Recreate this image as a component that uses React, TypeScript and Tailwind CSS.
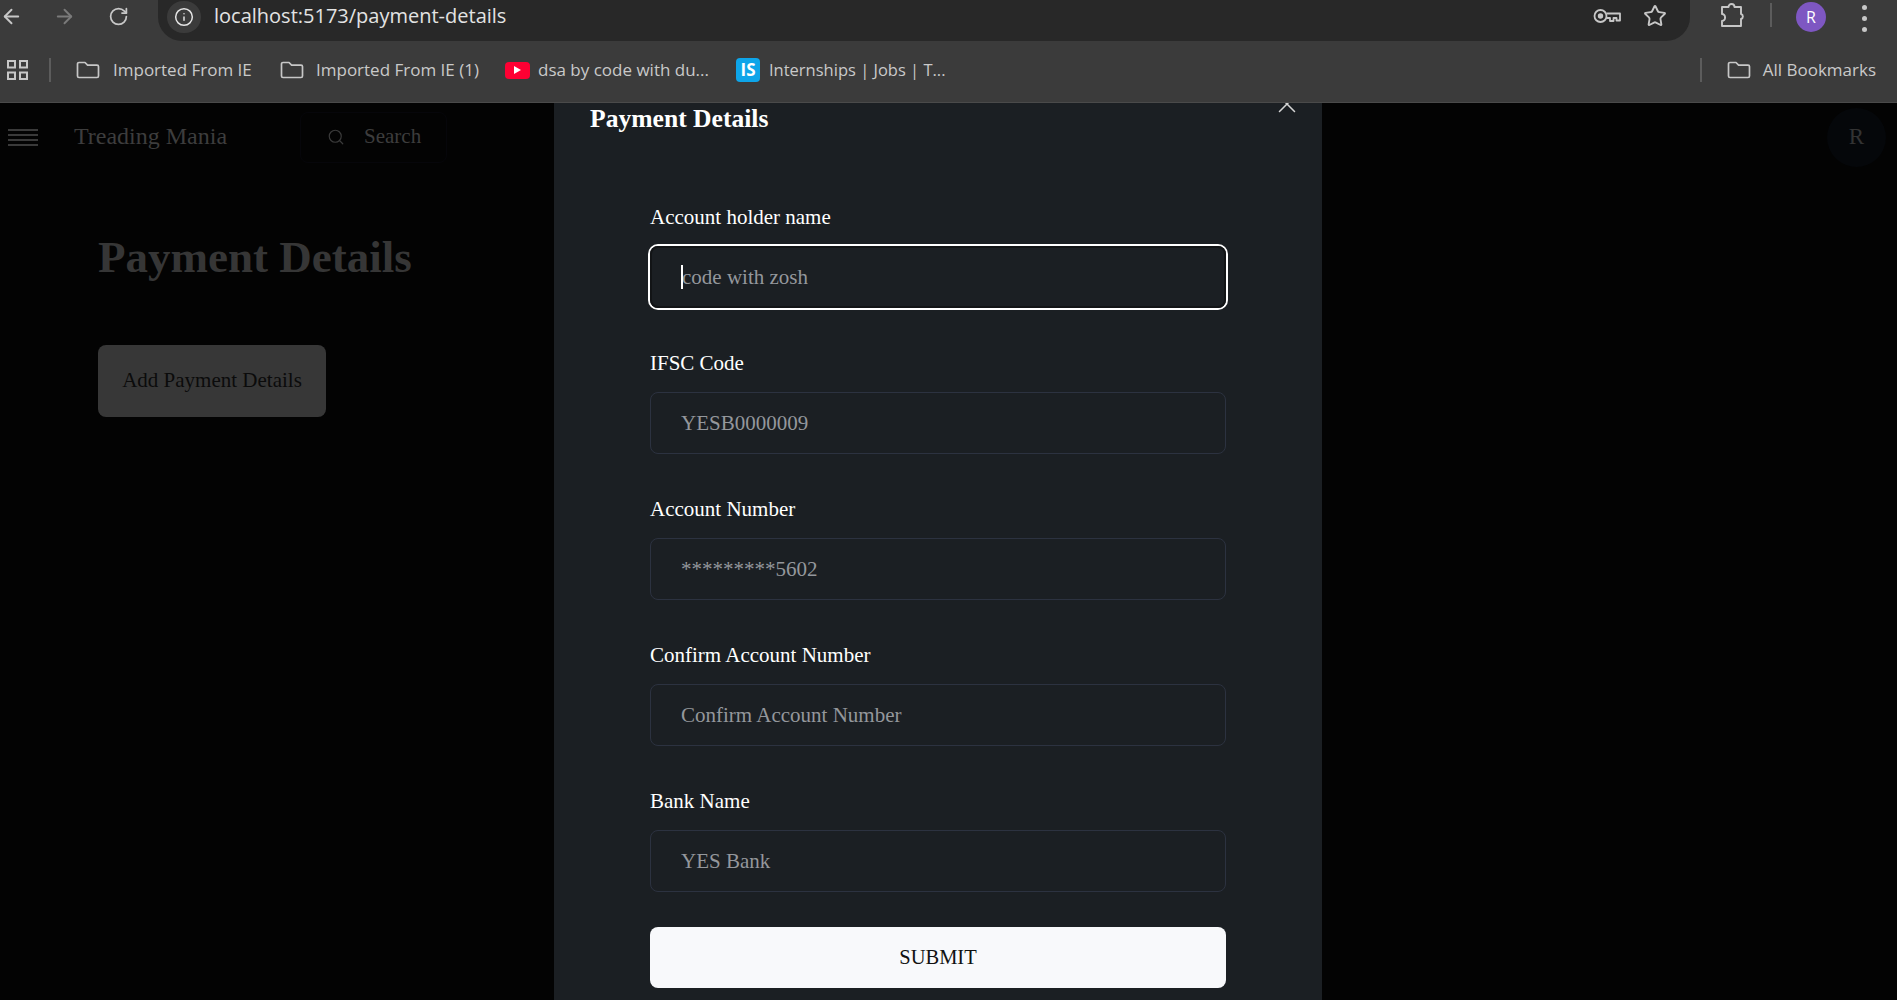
import { ArrowLeft, ArrowRight, RotateCw, Info, Star, Search, X } from 'lucide-react';

const uiFont = "font-['Open_Sans','Noto_Sans',sans-serif]";
const serif = "font-['Liberation_Serif',serif]";

function FolderIcon() {
  return (
    <svg width="24" height="18" viewBox="0 0 24 18" fill="none" stroke="#c7c7c7" strokeWidth="1.7" className="shrink-0">
      <path d="M1.5 15V3a1.5 1.5 0 0 1 1.5-1.5h6l2.6 2.6H21a1.5 1.5 0 0 1 1.5 1.5V15a1.5 1.5 0 0 1-1.5 1.5H3A1.5 1.5 0 0 1 1.5 15Z" strokeLinejoin="round" />
    </svg>
  );
}

function KeyIcon() {
  return (
    <svg width="28" height="16" viewBox="0 0 28 16" fill="none" stroke="#c7c7c7" strokeWidth="1.8">
      <circle cx="7.5" cy="8" r="6" />
      <circle cx="7.5" cy="8" r="1.8" fill="#c7c7c7" />
      <path d="M13.5 5.5H27v7h-3.5v-2.5h-3v3h-3.5v-3h-3.5" strokeLinejoin="round" />
    </svg>
  );
}

function PuzzleIcon() {
  return (
    <svg width="25" height="26" viewBox="0 0 25 26" fill="none" stroke="#c7c7c7" strokeWidth="1.9" strokeLinejoin="round">
      <path d="M2 5h6.5a3 3 0 0 1 6 0H21v7a2.6 2.6 0 0 1 0 5v7H2v-5a3 3 0 0 0 3-3.5A3 3 0 0 0 2 12Z" />
    </svg>
  );
}

function AppsIcon() {
  return (
    <svg width="21" height="20" viewBox="0 0 21 20" fill="none" stroke="#c7c7c7" strokeWidth="2">
      <rect x="1" y="1" width="7" height="6.5" />
      <rect x="13" y="1" width="7" height="6.5" />
      <rect x="1" y="12.5" width="7" height="6.5" />
      <rect x="13" y="12.5" width="7" height="6.5" />
    </svg>
  );
}

function BrowserChrome() {
  return (
    <div className={`shrink-0 h-[103px] bg-[#3b3b3b] border-b border-[#4a4a4a] ${uiFont}`}>
      <div className="h-[41px] flex">
        <div className="w-[158px] shrink-0 flex items-start pt-[5px]">
          <ArrowLeft size={23} strokeWidth={2} className="text-[#c7c7c7]" />
          <ArrowRight size={23} strokeWidth={2} className="text-[#7a7a7a] ml-[30px]" />
          <RotateCw size={21} strokeWidth={2} className="text-[#c7c7c7] ml-[32px] mt-[1px]" />
        </div>
        <div className="w-[1532px] shrink-0 bg-[#282828] rounded-br-[24px] rounded-bl-[24px] flex items-start pt-[1px]">
          <div className="ml-[9px] w-[34px] h-[32px] rounded-full bg-[#3b3b3b] flex items-center justify-center">
            <Info size={20} strokeWidth={1.8} className="text-[#e4e4e4]" />
          </div>
          <span className="ml-[13px] text-[20px] leading-[30px] text-[#e3e3e3]">localhost:5173/payment-details</span>
          <div className="ml-auto mr-[23px] flex items-center gap-[22px] pt-[3px]">
            <KeyIcon />
            <Star size={24} strokeWidth={1.9} className="text-[#c7c7c7]" />
          </div>
        </div>
        <div className="flex items-start pt-[2px] pl-[30px]">
          <PuzzleIcon />
          <div className="w-[2px] h-[24px] bg-[#5c5c5c] ml-[25px] mt-[1px]" />
          <div className="ml-[24px] w-[30px] h-[30px] rounded-full bg-[#7e57c2] flex items-center justify-center text-[16px] text-white">R</div>
          <div className="ml-[36px] flex flex-col gap-[6px] pt-[3px]">
            <span className="w-[5px] h-[5px] rounded-full bg-[#c7c7c7]" />
            <span className="w-[5px] h-[5px] rounded-full bg-[#c7c7c7]" />
            <span className="w-[5px] h-[5px] rounded-full bg-[#c7c7c7]" />
          </div>
        </div>
      </div>
      <div className="h-[61px] flex items-center pl-[7px] pb-[3px] text-[17px] text-[#c9c9c9]">
        <AppsIcon />
        <div className="w-[2px] h-[24px] bg-[#5c5c5c] ml-[21px] mr-[25px]" />
        <FolderIcon />
        <span className="ml-[13px] w-[167px] shrink-0 whitespace-nowrap">Imported From IE</span>
        <FolderIcon />
        <span className="ml-[12px] w-[189px] shrink-0 whitespace-nowrap">Imported From IE (1)</span>
        <div className="w-[25px] h-[17px] rounded-[4px] bg-[#ff0033] flex items-center justify-center shrink-0">
          <span className="block w-0 h-0 border-y-[4px] border-y-transparent border-l-[7px] border-l-white" />
        </div>
        <span className="ml-[8px] w-[198px] shrink-0 whitespace-nowrap">dsa by code with du...</span>
        <div className="w-[24px] h-[24px] rounded-[4px] bg-[#0ea5e9] flex items-center justify-center shrink-0 text-[17px] font-bold text-white">IS</div>
        <span className="ml-[9px] whitespace-nowrap text-[16.5px]">Internships | Jobs | T...</span>
        <div className="ml-auto w-[2px] h-[24px] bg-[#5c5c5c] mr-[25px]" />
        <FolderIcon />
        <span className="ml-[12px] mr-[21px] whitespace-nowrap">All Bookmarks</span>
      </div>
    </div>
  );
}

function Field({ label, placeholder, focused }: { label: string; placeholder: string; focused?: boolean }) {
  return (
    <div>
      <label className="block text-[21px] leading-[22px] text-white mb-[18px]">{label}</label>
      <div className="relative">
        <input
          readOnly
          placeholder={placeholder}
          className={`w-full h-[62px] pl-[30px] pr-4 rounded-lg bg-transparent outline-none text-[21px] text-white placeholder:text-[#94979c] ${serif} ${
            focused ? 'border-2 border-[#121416] ring-2 ring-white' : 'border border-[#2c3240]'
          }`}
        />
        {focused && <span className="absolute left-[31px] top-[19px] w-[2px] h-[24px] bg-white" />}
      </div>
    </div>
  );
}

function PageBehind() {
  return (
    <div className={`h-full bg-[#030303] ${serif}`}>
      <div className="h-[68px] flex items-center pl-2">
        <div className="w-[30px] flex flex-col gap-[3px]">
          <span className="h-[2px] bg-[#3a3a3a]" />
          <span className="h-[2px] bg-[#3a3a3a]" />
          <span className="h-[2px] bg-[#3a3a3a]" />
          <span className="h-[2px] bg-[#3a3a3a]" />
        </div>
        <span className="ml-[36px] mb-[2px] w-[226px] text-[24px] text-[#3d3d3d]">Treading Mania</span>
        <div className="w-[147px] h-[51px] flex items-center pl-[26px] border border-[#06060a] rounded-lg">
          <Search size={18} strokeWidth={1.6} className="text-[#3a3a3a]" />
          <span className="ml-[19px] text-[21px] text-[#3d3d3d]">Search</span>
        </div>
        <div className="ml-auto mr-[11px] w-[59px] h-[59px] rounded-full bg-[#05070a] flex items-center justify-center text-[23px] text-[#333333]">R</div>
      </div>
      <div className="pl-[98px] pt-[57px]">
        <h1 className="text-[45px] leading-[58px] font-bold text-[#363636]">Payment Details</h1>
        <button className="mt-[59px] w-[228px] h-[72px] rounded-lg bg-[#373737] text-[21px] text-[#0b0b0b]">Add Payment Details</button>
      </div>
    </div>
  );
}

export default function App() {
  return (
    <div className="h-screen flex flex-col overflow-hidden bg-[#030303]">
      <BrowserChrome />
      <div className="relative flex-1 overflow-hidden">
        <PageBehind />
        {/* dialog sits over the dimmed page */}
        <div className={`absolute top-0 bottom-0 left-[554px] w-[768px] bg-[#1b1f23] overflow-hidden ${serif}`}>
          <X size={30} strokeWidth={1.2} className="absolute right-[20px] top-[-14px] text-[#d5d5d5]" />
          <h2 className="pl-9 h-8 text-[25.6px] leading-8 font-bold text-white">Payment Details</h2>
          <div className="mt-[71px] ml-[96px] w-[576px] flex flex-col gap-[44px]">
            <Field label="Account holder name" placeholder="code with zosh" focused />
            <Field label="IFSC Code" placeholder="YESB0000009" />
            <Field label="Account Number" placeholder="*********5602" />
            <Field label="Confirm Account Number" placeholder="Confirm Account Number" />
            <Field label="Bank Name" placeholder="YES Bank" />
          </div>
          <button className="mt-[35px] ml-[96px] w-[576px] h-[61px] rounded-lg bg-[#f8f9fb] text-[20.5px] text-[#111111]">SUBMIT</button>
        </div>
      </div>
    </div>
  );
}
